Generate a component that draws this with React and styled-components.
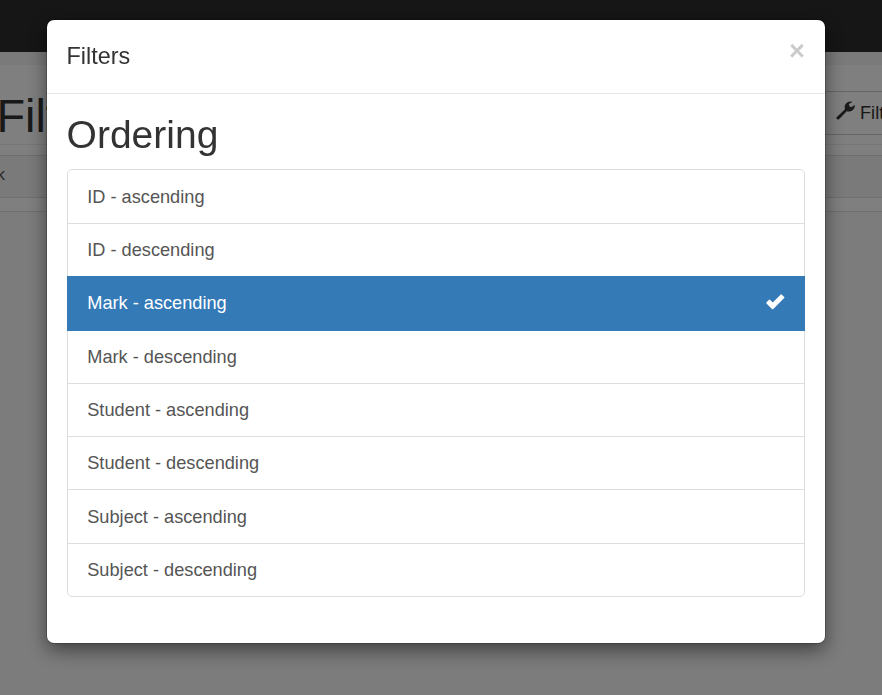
import React from "react";
import styled, { createGlobalStyle } from "styled-components";

const GlobalStyle = createGlobalStyle`
  *, *::before, *::after { box-sizing: border-box; }
  body {
    margin: 0;
    overflow: hidden;
    background: #f9f9f9;
    color: #333;
    font-family: "Liberation Sans", Arial, Helvetica, sans-serif;
    font-size: 18.2px;
    line-height: 26px;
  }
`;

const Page = styled.div`
  height: 695px;
  overflow: hidden;
`;

const Navbar = styled.div`
  height: 52px;
  background: #2c2c2c;
`;

const Gutter = styled.div`
  height: 13px;
  background: #f4f4f4;
`;

const PageHeader = styled.header`
  display: flex;
  justify-content: space-between;
  align-items: flex-start;
  height: 80px;
  padding-top: 26px;
  background: #fff;
  border-bottom: 1px solid #eee;
`;

const PageTitle = styled.h1`
  margin: 0 0 0 -3.6px;
  font-size: 46.8px;
  line-height: 51px;
  font-weight: 500;
`;

const FilterButton = styled.button`
  display: flex;
  align-items: center;
  gap: 5px;
  flex: none;
  width: 90px;
  height: 44px;
  margin-right: -30px;
  padding: 0 0 0 17px;
  border: 1px solid #ccc;
  border-radius: 5px;
  background: #fff;
  color: #333;
  font: inherit;
`;

const Spacer = styled.div`
  height: 10px;
  background: #fff;
`;

const TableHead = styled.div`
  height: 43px;
  padding-top: 6px;
  border: solid #ddd;
  border-width: 1px 0;
  background: #f5f5f5;
  color: #555;
  font-size: 17px;
`;

const HeadLabel = styled.span`
  display: block;
  width: 5px;
  direction: rtl;
  white-space: nowrap;
`;

const TableEnd = styled.div`
  height: 14px;
  background: #fff;
  border-bottom: 1px solid #ddd;
`;

const Backdrop = styled.div`
  position: fixed;
  inset: 0;
  padding: 20px 0 0 47px;
  background: rgba(0, 0, 0, 0.5);
`;

const Dialog = styled.section`
  width: 778px;
  height: 623px;
  border-radius: 7px;
  background: #fff;
  box-shadow: 0 0 0 1px rgba(0, 0, 0, 0.2), 0 6.5px 19.5px rgba(0, 0, 0, 0.5);
`;

const DialogHeader = styled.div`
  display: flex;
  justify-content: space-between;
  height: 74px;
  padding: 19px 20px 0 19.5px;
  border-bottom: 1px solid #e5e5e5;
`;

const DialogTitle = styled.h4`
  margin: 0;
  font-size: 23.4px;
  line-height: 34px;
  font-weight: 500;
`;

const CloseButton = styled.button`
  height: 27px;
  margin-top: -2px;
  padding: 0;
  border: 0;
  background: transparent;
  color: #000;
  opacity: 0.2;
  font: bold 27.3px/27px "Liberation Sans", Arial, sans-serif;
`;

const DialogBody = styled.div`
  padding: 19px 20px 0 19.6px;
`;

const GroupTitle = styled.h2`
  margin: 0 0 13.4px;
  font-size: 39px;
  line-height: 43px;
  font-weight: 500;
`;

const OptionList = styled.div`
  display: flex;
  flex-direction: column;
`;

const Option = styled.a`
  display: flex;
  align-items: center;
  justify-content: space-between;
  position: relative;
  z-index: ${(p) => (p.$active ? 1 : 0)};
  height: ${(p) => (p.$active ? 55 : 54.33)}px;
  margin-bottom: ${(p) => (p.$active ? -1.6 : -1)}px;
  padding: 0 19px ${(p) => (p.$active ? 0.8 : 0)}px 19.65px;
  border: 1px solid ${(p) => (p.$active ? "#337ab7" : "#ddd")};
  background: ${(p) => (p.$active ? "#337ab7" : "#fff")};
  color: ${(p) => (p.$active ? "#fff" : "#555")};
  &:first-child { border-radius: 5px 5px 0 0; }
  &:last-child { border-radius: 0 0 5px 5px; }
`;

const CheckSvg = styled.svg`
  width: 19px;
  height: 16px;
  margin: -2.4px -0.4px 0 0;
  fill: currentColor;
`;

const WrenchSvg = styled.svg`
  width: 19px;
  height: 19px;
  margin: -5px 0 0 -4px;
  fill: currentColor;
`;

const Check = () => (
  <CheckSvg viewBox="0 0 19 16">
    <path d="M.5 8.2 2.9 5.9q.7-.6 1.4 0l2.5 2.5L14.5.7q.7-.7 1.4 0l2.3 2.2q.5.6 0 1.2L7.3 15q-.7.7-1.4 0L.5 9.4q-.5-.6 0-1.2Z" />
  </CheckSvg>
);

const Wrench = () => (
  <WrenchSvg viewBox="0 0 19 19">
    <path d="M.6 16.2 8.8 8.5Q7.7 5.2 9.7 2.7 11.9.1 15.6.5L16.2 1 12.9 3.1 13.4 5.3 15.3 6.2 18.6 4.1 18.9 4.8Q18.4 8.6 15.2 10.1 12.9 11 10.7 10.3L3 18.3Q2.2 18.9 1.4 18.2L.6 17.4Q0 16.8.6 16.2Z" />
  </WrenchSvg>
);

const options = ["ID", "Mark", "Student", "Subject"].flatMap((name) => [
  `${name} - ascending`,
  `${name} - descending`,
]);

export default function App() {
  return (
    <>
      <GlobalStyle />
      <Page>
        <Navbar />
        <Gutter />
        <PageHeader>
          <PageTitle>Filters</PageTitle>
          <FilterButton>
            <Wrench />
            Filters
          </FilterButton>
        </PageHeader>
        <Spacer />
        <TableHead>
          <HeadLabel>Mark</HeadLabel>
        </TableHead>
        <TableEnd />
      </Page>
      <Backdrop>
        <Dialog role="dialog">
          <DialogHeader>
            <DialogTitle>Filters</DialogTitle>
            <CloseButton aria-label="Close">×</CloseButton>
          </DialogHeader>
          <DialogBody>
            <GroupTitle>Ordering</GroupTitle>
            <OptionList>
              {options.map((label) => {
                const active = label === "Mark - ascending";
                return (
                  <Option key={label} $active={active}>
                    {label}
                    {active && <Check />}
                  </Option>
                );
              })}
            </OptionList>
          </DialogBody>
        </Dialog>
      </Backdrop>
    </>
  );
}
